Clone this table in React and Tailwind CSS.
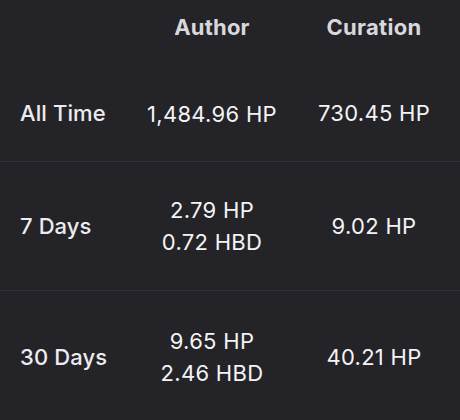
export default function App() {
  const rows = [
    { label: "All Time", author: ["1,484.96 HP"], curation: "730.45 HP", h: "h-[96px]" },
    { label: "7 Days", author: ["2.79 HP", "0.72 HBD"], curation: "9.02 HP", h: "h-[129px]" },
    { label: "30 Days", author: ["9.65 HP", "2.46 HBD"], curation: "40.21 HP", h: "h-[132px]" },
  ];
  return (
    <div className="w-[460px] h-[420px] overflow-hidden bg-[#242328] font-['Inter','Liberation_Sans',sans-serif]">
      <div className="grid grid-cols-[132px_160px_164px] h-[66px] pt-[13px]">
        <div />
        <div className="text-center text-[22px] leading-[28px] font-bold tracking-[0.2px] text-[#d8d8dc]">Author</div>
        <div className="text-center text-[22px] leading-[28px] font-bold tracking-[0.3px] text-[#d8d8dc]">Curation</div>
      </div>
      {rows.map((r, i) => (
        <div
          key={r.label}
          className={`grid grid-cols-[132px_160px_164px] items-center ${r.h} ${i < rows.length - 1 ? "border-b border-[#313036]" : ""}`}
        >
          <div className="pl-5 text-[22px] font-medium tracking-[0.1px] text-[#ececf0]">{r.label}</div>
          <div className="flex flex-col items-center text-[22px] leading-[32px] tracking-[0.3px] text-[#f4f4f6]">
            {r.author.map((a) => (
              <span key={a}>{a}</span>
            ))}
          </div>
          <div className="text-center text-[22px] tracking-[0.3px] text-[#f4f4f6]">{r.curation}</div>
        </div>
      ))}
    </div>
  );
}
